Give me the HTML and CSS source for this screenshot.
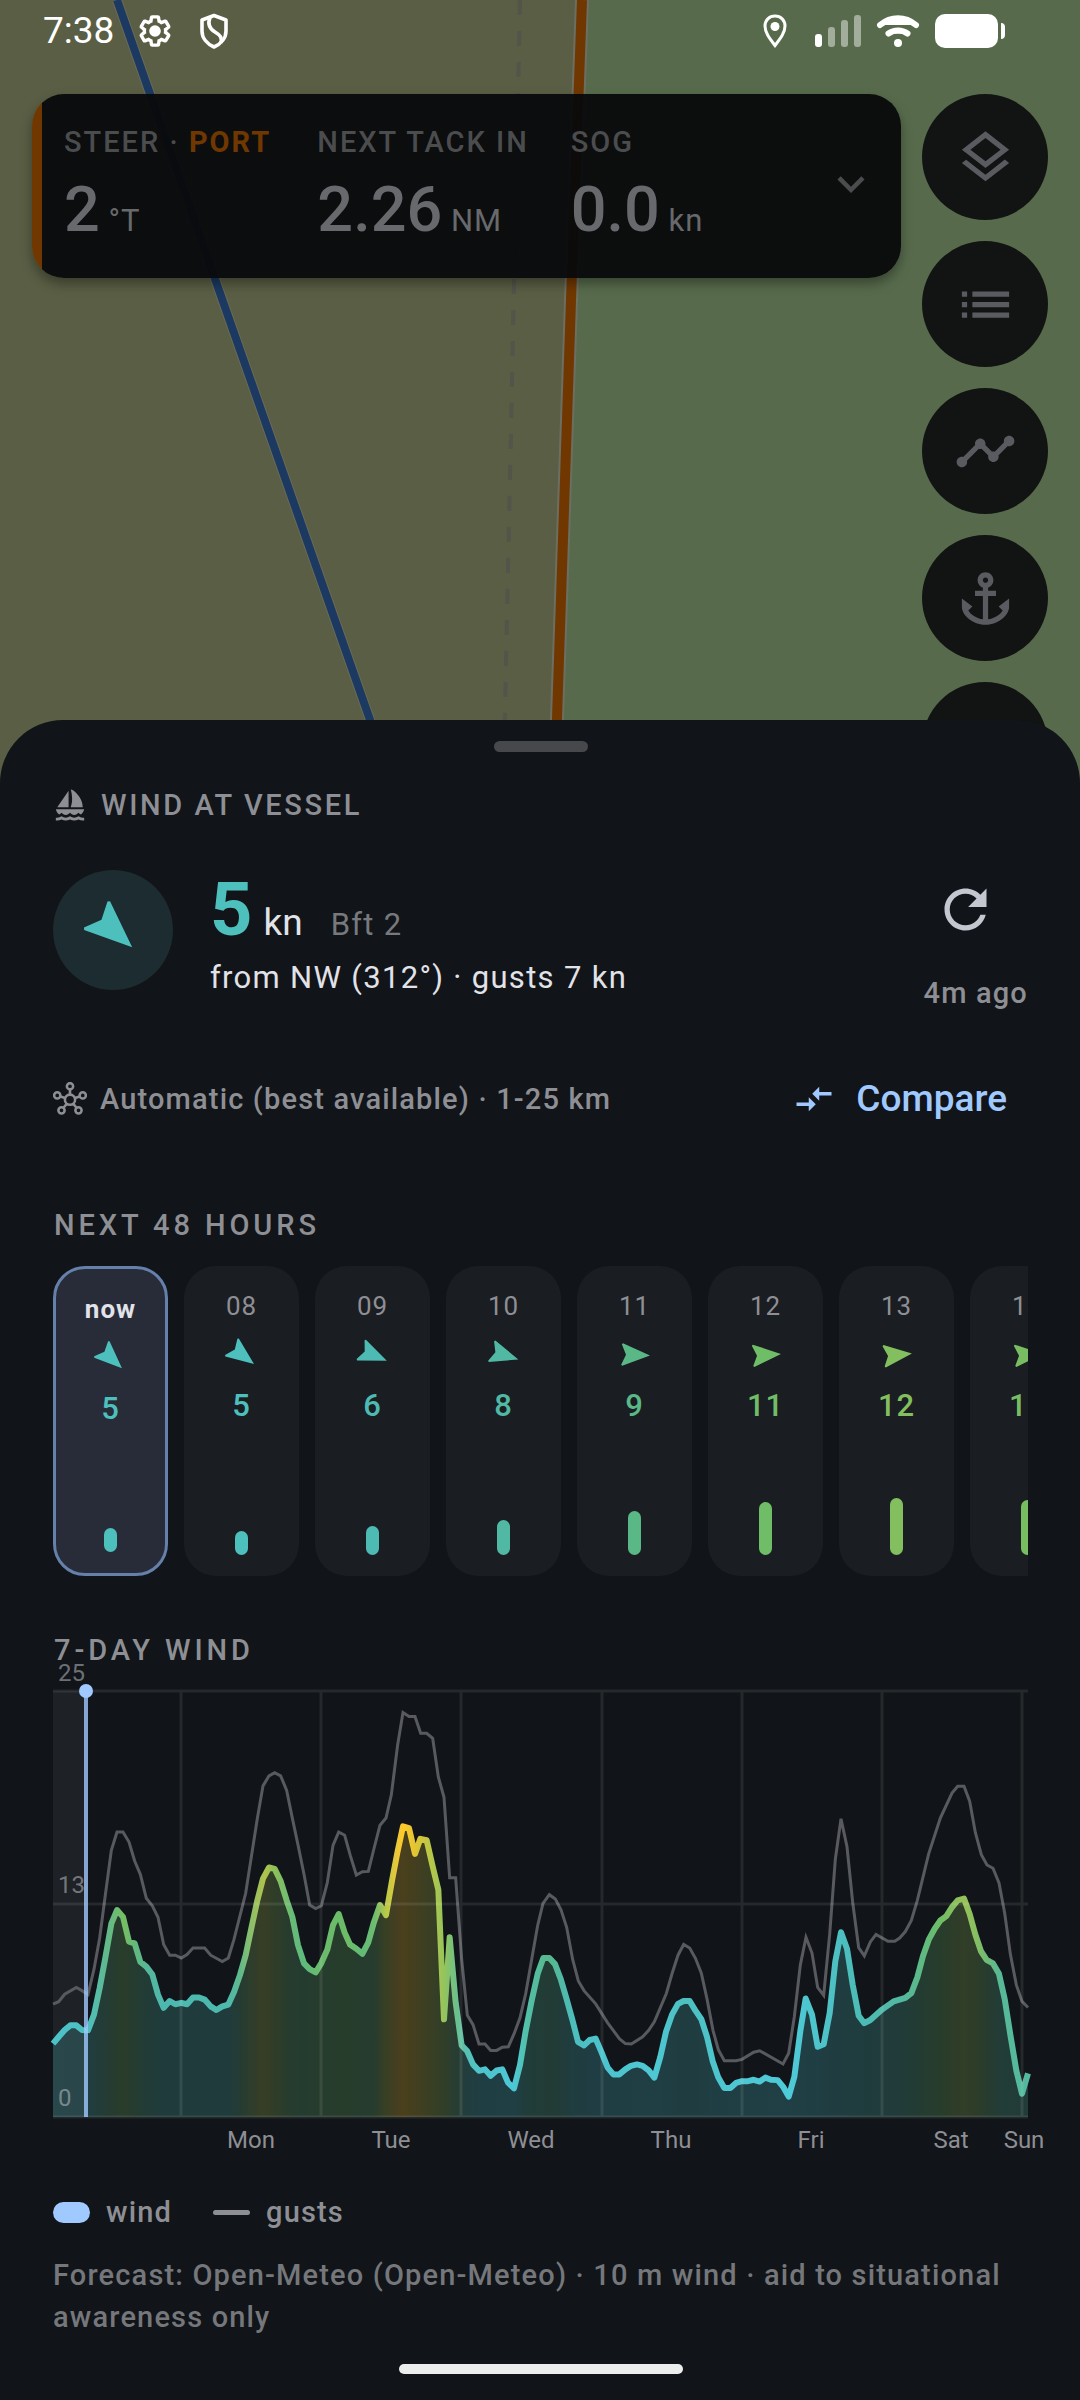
FILE: index.html
```html
<!DOCTYPE html>
<html lang="en">
<head>
<meta charset="utf-8">
<meta name="viewport" content="width=device-width, initial-scale=1">
<title>Wind at vessel</title>
<link rel="stylesheet" href="styles.css">
</head>
<body>
<svg class="defs" aria-hidden="true">
  <symbol id="arrow" viewBox="0 0 24 24"><path d="M12 2L4.5 20.29l.71.71L12 18l6.79 3 .71-.71z"/></symbol>
</svg>

<header class="scene">
  <svg class="map" viewBox="0 0 1080 808" preserveAspectRatio="xMidYMin slice" aria-hidden="true">
    <rect width="1080" height="808" fill="#5a5e44"/>
    <path d="M582 0H1080V808H554z" fill="#576b4c"/>
    <path d="M520 0L503 808" stroke="#53544a" stroke-width="4" stroke-dasharray="15 16" fill="none"/>
    <path d="M117 0L401 808" stroke="#6b6a58" stroke-width="10" fill="none"/>
    <path d="M117 0L401 808" stroke="#1b3961" stroke-width="8" fill="none"/>
    <path d="M582 0L571 300 554 808" stroke="#6c6e62" stroke-width="14" fill="none"/>
    <path d="M582 0L571 300 554 808" stroke="#703800" stroke-width="10" fill="none"/>
  </svg>

  <div class="status">
    <time class="clock">7:38</time>
    <svg class="status-icon gear" viewBox="0 0 24 24" width="40" height="40"><path d="M19.43 12.98c.04-.32.07-.64.07-.98s-.03-.66-.07-.98l2.11-1.65c.19-.15.24-.42.12-.64l-2-3.46c-.09-.16-.26-.25-.44-.25-.06 0-.12.01-.17.03l-2.49 1c-.52-.4-1.08-.73-1.69-.98l-.38-2.65C14.46 2.18 14.25 2 14 2h-4c-.25 0-.46.18-.49.42l-.38 2.65c-.61.25-1.17.59-1.69.98l-2.49-1c-.06-.02-.12-.03-.18-.03-.17 0-.34.09-.43.25l-2 3.46c-.13.22-.07.49.12.64l2.11 1.65c-.04.32-.07.65-.07.98s.03.66.07.98l-2.11 1.65c-.19.15-.24.42-.12.64l2 3.46c.09.16.26.25.44.25.06 0 .12-.01.17-.03l2.49-1c.52.4 1.08.73 1.69.98l.38 2.65c.03.24.24.42.49.42h4c.25 0 .46-.18.49-.42l.38-2.65c.61-.25 1.17-.59 1.69-.98l2.49 1c.06.02.12.03.18.03.17 0 .34-.09.43-.25l2-3.46c.12-.22.07-.49-.12-.64z" fill="none" stroke="#fff" stroke-width="2.4" transform="translate(1.8 1.8) scale(.85)"/><circle cx="12" cy="12" r="3.5" fill="#fff"/></svg>
    <svg class="status-icon" viewBox="0 0 30 36" width="30" height="36"><path d="M15 2.500L27 7V18C27 25 22 31 15 34 8 31 3 25 3 18V7z" fill="none" stroke="#fff" stroke-width="3.600" stroke-linejoin="round"/><path d="M11 4.500C8 12 11 16 16 19 22 22.500 23 25 22 30" fill="none" stroke="#fff" stroke-width="3.600"/></svg>
    <span class="spacer"></span>
    <svg class="status-icon pin" viewBox="0 0 24 34" width="24" height="34"><path d="M12 2C6.200 2 2 6.300 2 12c0 7 5 13 10 19.500C17 25 22 19 22 12 22 6.300 17.800 2 12 2z" fill="none" stroke="#fff" stroke-width="3"/><circle cx="12" cy="12.500" r="4.500" fill="#fff"/></svg>
    <svg class="status-icon signal" viewBox="0 0 46 34" width="46" height="34" fill="#fff"><rect x="0" y="20" width="7" height="13" rx="3"/><g fill-opacity=".45"><rect x="13" y="13" width="7" height="20" rx="3"/><rect x="26" y="6" width="7" height="27" rx="3"/><rect x="39" y="1" width="7" height="32" rx="3"/></g></svg>
    <svg class="status-icon" viewBox="0 0 44 34" width="44" height="34" fill="none" stroke="#fff" stroke-width="6" stroke-linecap="round"><path d="M4 11C15 2 29 2 40 11M12.500 19.500C18 15.500 26 15.500 31.500 19.500"/><circle cx="22" cy="29" r="4" fill="#fff" stroke="none"/></svg>
    <svg class="status-icon" viewBox="0 0 71 34" width="71" height="34" fill="#fff"><rect width="63" height="34" rx="10"/><path d="M66 9c3 0 4 2 4 4v8c0 2-1 4-4 4z"/></svg>
  </div>

  <div class="overlay">
    <section class="steer-card" aria-label="Steering">
      <div class="metric">
        <span class="metric-label">STEER · <b>PORT</b></span>
        <span class="metric-value"><strong>2</strong> °T</span>
      </div>
      <div class="metric">
        <span class="metric-label">NEXT TACK IN</span>
        <span class="metric-value"><strong>2.26</strong> NM</span>
      </div>
      <div class="metric">
        <span class="metric-label">SOG</span>
        <span class="metric-value"><strong>0.0</strong> kn</span>
      </div>
      <button class="expand" aria-label="Expand"><svg viewBox="0 0 24 24" width="54" height="54"><path d="M16.590 8.590L12 13.170 7.410 8.590 6 10l6 6 6-6z"/></svg></button>
    </section>
    <nav class="tools" aria-label="Map tools">
      <button class="tool" aria-label="Layers"><svg viewBox="0 0 24 24"><path fill-rule="evenodd" d="M11.990 18.540l-7.370-5.730L3 14.070l9 7 9-7-1.630-1.270zM12 16l7.360-5.730L21 9l-9-7-9 7 1.630 1.270zm0-11.470L17.740 9 12 13.470 6.260 9z"/></svg></button>
      <button class="tool" aria-label="List"><svg viewBox="0 0 24 24"><path d="M3 13h2v-2H3zm0 4h2v-2H3zm0-8h2V7H3zm4 4h14v-2H7zm0 4h14v-2H7zM7 7v2h14V7z"/></svg></button>
      <button class="tool" aria-label="Track"><svg viewBox="0 0 24 24"><path d="M23 8c0 1.100-.9 2-2 2-.18 0-.35-.02-.51-.07l-3.560 3.550c.05.160.07.340.07.520 0 1.100-.9 2-2 2s-2-.9-2-2c0-.18.020-.36.070-.52l-2.550-2.550c-.16.050-.34.070-.52.070s-.36-.02-.52-.07l-4.550 4.560c.05.160.07.330.07.510 0 1.100-.9 2-2 2s-2-.9-2-2 .9-2 2-2c.18 0 .35.020.51.070l4.560-4.550C8.020 9.360 8 9.180 8 9c0-1.100.9-2 2-2s2 .9 2 2c0 .18-.02.360-.07.520l2.550 2.550c.16-.05.340-.07.520-.07s.36.020.52.070l3.550-3.560C19.020 8.350 19 8.180 19 8c0-1.100.9-2 2-2s2 .9 2 2z"/></svg></button>
      <button class="tool" aria-label="Anchor"><svg viewBox="0 0 24 24"><path fill-rule="evenodd" d="M17 15l1.550 1.550c-.96 1.690-3.330 3.040-5.550 3.370V11h3V9h-3V7.820C14.160 7.400 15 6.300 15 5c0-1.650-1.350-3-3-3S9 3.350 9 5c0 1.300.84 2.400 2 2.820V9H8v2h3v8.920c-2.220-.33-4.590-1.680-5.550-3.370L7 15l-4-3v3c0 3.880 4.920 7 9 7s9-3.120 9-7v-3l-4 3zM12 4c.55 0 1 .45 1 1s-.45 1-1 1-1-.45-1-1 .45-1 1-1z"/></svg></button>
      <button class="tool" aria-label="More"></button>
    </nav>
  </div>
</header>

<main class="sheet">
  <div class="handle"></div>

  <h1 class="title">
    <svg viewBox="0 0 24 24" width="34" height="34" aria-hidden="true"><path d="M11 13.500V2L3 13.500h8zm10 0C21 6.500 14.500 1 12.500 1c0 0 1 3 1 6.500s-1 6-1 6H21zm1 1.500H2c.31 1.530 1.160 2.840 2.330 3.730.65-.27 1.220-.72 1.670-1.230.73.840 1.800 1.500 3 1.500s2.270-.66 3-1.500c.73.840 1.800 1.500 3 1.500s2.260-.66 3-1.500c.45.510 1.020.96 1.670 1.230C20.840 17.840 21.690 16.530 22 15zm0 8v-2h-1c-1.040 0-2.080-.35-3-1-1.830 1.300-4.170 1.300-6 0-1.830 1.300-4.170 1.300-6 0-.91.650-1.960 1-3 1H2v2h1c1.030 0 2.050-.25 3-.75 1.890 1 4.110 1 6 0 1.890 1 4.110 1 6 0 .95.500 1.970.750 3 .750h1z"/></svg>
    WIND AT VESSEL
  </h1>

  <section class="current">
    <div class="dial"><svg width="62" height="62" style="transform:rotate(132deg)"><use href="#arrow"/></svg></div>
    <div class="reading">
      <p class="speed"><strong>5</strong><span class="unit">kn</span><span class="bft">Bft 2</span></p>
      <p class="detail">from NW (312°) · gusts 7 kn</p>
    </div>
    <div class="update">
      <button class="refresh" aria-label="Refresh"><svg viewBox="0 0 24 24" width="63" height="63"><path d="M17.650 6.350C16.200 4.900 14.210 4 12 4c-4.420 0-7.990 3.580-7.990 8s3.570 8 7.990 8c3.730 0 6.840-2.550 7.730-6h-2.080c-.82 2.330-3.040 4-5.650 4-3.310 0-6-2.690-6-6s2.690-6 6-6c1.660 0 3.140.69 4.220 1.780L13 11h7V4l-2.350 2.350z"/></svg></button>
      <span class="age">4m ago</span>
    </div>
  </section>

  <section class="source">
    <svg class="hub" viewBox="0 0 24 24" width="34" height="34" aria-hidden="true"><circle cx="12" cy="12.500" r="3.600"/><circle cx="12" cy="3" r="2.200"/><circle cx="3" cy="9.500" r="2.200"/><circle cx="21" cy="9.500" r="2.200"/><circle cx="6" cy="20" r="2.200"/><circle cx="18" cy="20" r="2.200"/><path d="M12 5.200V9M5.200 10.200L8.500 11.300M18.800 10.200L15.500 11.300M7.400 18.200L9.700 15.400M16.600 18.200L14.300 15.400"/></svg>
    <span class="model">Automatic (best available) · 1-25 km</span>
    <button class="compare"><svg viewBox="0 0 24 24" width="42" height="42" aria-hidden="true"><path d="M9.010 14H2v2h7.010v3L13 15l-3.990-4v3zm5.980-1v-3H22V8h-7.010V5L11 9l3.990 4z"/></svg>Compare</button>
  </section>

  <h2 class="heading">NEXT 48 HOURS</h2>
  <ul class="hours">
    <li class="hour now" style="color:#4dbfbc"><span class="hour-label">now</span><svg class="dir" style="transform:rotate(133deg)"><use href="#arrow"/></svg><span class="hour-value">5</span><i class="bar" style="height:24px"></i></li>
    <li class="hour" style="color:#4dbfbc"><span class="hour-label">08</span><svg class="dir" style="transform:rotate(127deg)"><use href="#arrow"/></svg><span class="hour-value">5</span><i class="bar" style="height:24px"></i></li>
    <li class="hour" style="color:#4dbab3"><span class="hour-label">09</span><svg class="dir" style="transform:rotate(113deg)"><use href="#arrow"/></svg><span class="hour-value">6</span><i class="bar" style="height:29px"></i></li>
    <li class="hour" style="color:#51b8a4"><span class="hour-label">10</span><svg class="dir" style="transform:rotate(107deg)"><use href="#arrow"/></svg><span class="hour-value">8</span><i class="bar" style="height:35px"></i></li>
    <li class="hour" style="color:#5ab886"><span class="hour-label">11</span><svg class="dir" style="transform:rotate(92deg)"><use href="#arrow"/></svg><span class="hour-value">9</span><i class="bar" style="height:44px"></i></li>
    <li class="hour" style="color:#70bd68"><span class="hour-label">12</span><svg class="dir" style="transform:rotate(86deg)"><use href="#arrow"/></svg><span class="hour-value">11</span><i class="bar" style="height:53px"></i></li>
    <li class="hour" style="color:#83be5f"><span class="hour-label">13</span><svg class="dir" style="transform:rotate(84deg)"><use href="#arrow"/></svg><span class="hour-value">12</span><i class="bar" style="height:57px"></i></li>
    <li class="hour" style="color:#79bd63"><span class="hour-label">14</span><svg class="dir" style="transform:rotate(86deg)"><use href="#arrow"/></svg><span class="hour-value">11</span><i class="bar" style="height:55px"></i></li>
  </ul>

  <h2 class="heading week">7-DAY WIND</h2>
  <svg class="chart" viewBox="0 0 975 484" role="img" aria-label="7-day wind and gusts">
    <defs>
      <linearGradient id="scale" gradientUnits="userSpaceOnUse" x1="0" y1="0" x2="3083" y2="0">
        <stop offset=".052" stop-color="#4cc3c8"/><stop offset=".085" stop-color="#4dbfc0"/><stop offset=".102" stop-color="#5fb98f"/><stop offset=".120" stop-color="#76be63"/><stop offset=".131" stop-color="#62b97c"/><stop offset=".143" stop-color="#56b89a"/><stop offset=".159" stop-color="#4db8b0"/><stop offset=".222" stop-color="#4db8ad"/><stop offset=".233" stop-color="#5fb98b"/><stop offset=".242" stop-color="#86be70"/><stop offset=".257" stop-color="#b0c34c"/><stop offset=".268" stop-color="#8bc05c"/><stop offset=".284" stop-color="#68bb78"/><stop offset=".295" stop-color="#5fba7e"/><stop offset=".311" stop-color="#69bb6c"/><stop offset=".340" stop-color="#6cbc68"/><stop offset=".352" stop-color="#62ba78"/><stop offset=".364" stop-color="#6dbc70"/><stop offset=".375" stop-color="#b5c94a"/><stop offset=".387" stop-color="#f0c838"/><stop offset=".392" stop-color="#ffca28"/><stop offset=".404" stop-color="#e0c535"/><stop offset=".415" stop-color="#c2c843"/><stop offset=".432" stop-color="#94c45c"/><stop offset=".443" stop-color="#6fc088"/><stop offset=".454" stop-color="#56c0b5"/><stop offset=".466" stop-color="#4dc4cc"/><stop offset=".500" stop-color="#4dc8d6"/><stop offset=".512" stop-color="#52bfa8"/><stop offset=".534" stop-color="#58b88c"/><stop offset=".545" stop-color="#52b9a3"/><stop offset=".557" stop-color="#4dbdbc"/><stop offset=".584" stop-color="#4cc3cd"/><stop offset=".636" stop-color="#4ec8d4"/><stop offset=".665" stop-color="#4dbfc0"/><stop offset=".707" stop-color="#4dc6d0"/><stop offset=".767" stop-color="#4ecad8"/><stop offset=".818" stop-color="#4dbfc0"/><stop offset=".841" stop-color="#4cbbb4"/><stop offset=".876" stop-color="#52b8a2"/><stop offset=".892" stop-color="#5ab98b"/><stop offset=".915" stop-color="#6fbd66"/><stop offset=".938" stop-color="#98c158"/><stop offset=".950" stop-color="#85be62"/><stop offset=".960" stop-color="#6fbb78"/><stop offset=".973" stop-color="#57b997"/><stop offset="1" stop-color="#54b9a0"/>
      </linearGradient>
    </defs>
    <rect class="past" x="0" y="20" width="33" height="426"/>
    <svg class="plot" x="0" y="20" width="975" height="426" viewBox="158 200 2925 1190" preserveAspectRatio="none">
      <path class="area" d="M158 1390V1185L176 1165 193 1147 210 1134 228 1134 245 1147 263 1148 281 1104 298 1030 315 945 333 850 350 812 368 831 386 900 403 905 420 957 438 970 456 992 473 1048 490 1085 508 1066 525 1075 543 1071 560 1075 578 1056 596 1056 613 1062 631 1081 648 1091 666 1081 684 1076 701 1041 719 993 736 938 754 858 771 785 788 724 806 693 823 697 841 731 859 785 876 831 893 910 911 961 928 977 946 986 963 960 981 922 998 854 1015 823 1033 875 1049 908 1068 920 1086 934 1104 902 1121 845 1139 798 1157 826 1175 730 1192 647 1208 578 1226 583 1244 655 1260 613 1279 617 1297 690 1314 755 1331 1117 1348 888 1366 1070 1384 1190 1400 1205 1418 1243 1436 1261 1454 1257 1471 1275 1489 1260 1506 1257 1523 1294 1541 1310 1559 1245 1576 1150 1594 1065 1612 990 1629 946 1647 946 1664 963 1681 1004 1698 1058 1716 1118 1733 1180 1751 1190 1768 1175 1786 1171 1804 1210 1822 1252 1839 1271 1857 1271 1875 1257 1892 1247 1910 1243 1927 1247 1945 1260 1962 1280 1980 1222 1997 1152 2015 1104 2033 1074 2050 1066 2068 1066 2085 1092 2103 1117 2120 1166 2137 1234 2154 1280 2172 1309 2190 1309 2207 1295 2225 1290 2243 1290 2260 1286 2278 1291 2295 1280 2312 1286 2332 1287 2348 1305 2365 1333 2382 1278 2400 1150 2416 1059 2435 1104 2452 1194 2470 1187 2488 1100 2505 955 2522 874 2540 920 2557 1020 2575 1107 2592 1128 2610 1119 2645 1090 2680 1067 2715 1057 2733 1044 2751 1000 2768 940 2786 893 2803 864 2820 841 2838 829 2855 804 2872 785 2891 780 2908 823 2925 880 2942 927 2959 951 2978 961 2996 990 3013 1060 3030 1160 3048 1260 3065 1325 3083 1268V1390z"/>
      <path class="gust" d="M158 1075L175 1068 193 1047 228 1028 245 1037 263 1048 281 977 298 890 315 770 333 645 350 594 368 594 386 622 403 675 420 712 438 779 456 800 473 832 490 908 508 938 525 938 543 946 560 936 578 918 613 918 631 938 666 956 684 946 701 894 736 765 771 556 788 465 806 437 823 428 841 437 859 478 876 555 893 630 911 712 928 798 946 808 963 800 981 735 998 631 1015 594 1033 603 1050 660 1068 714 1086 705 1104 704 1121 640 1139 575 1157 555 1173 490 1192 350 1208 260 1226 271 1244 271 1261 318 1279 318 1297 332 1314 440 1331 497 1348 722 1366 722 1384 950 1401 1106 1418 1132 1436 1186 1454 1186 1471 1204 1489 1204 1506 1195 1524 1194 1541 1158 1559 1113 1576 1046 1594 950 1612 855 1628 793 1647 769 1665 781 1682 811 1699 860 1717 950 1734 1010 1751 1037 1786 1074 1822 1127 1857 1171 1875 1185 1893 1186 1927 1166 1945 1148 1962 1124 1998 1045 2015 990 2033 938 2050 908 2068 918 2085 946 2103 988 2120 1060 2138 1148 2154 1202 2172 1233 2207 1233 2225 1229 2260 1209 2278 1205 2348 1242 2365 1212 2382 1110 2400 965 2417 888 2435 932 2452 1028 2470 1050 2488 880 2505 670 2522 557 2540 635 2557 790 2575 917 2592 940 2610 901 2627 880 2663 899 2683 899 2698 890 2715 872 2733 841 2751 785 2785 655 2820 555 2855 485 2872 466 2891 466 2908 508 2925 595 2943 657 2960 686 2978 695 2996 736 3013 820 3030 935 3048 1021 3065 1067 3083 1084"/>
      <path class="wind" d="M158 1185L176 1165 193 1147 210 1134 228 1134 245 1147 263 1148 281 1104 298 1030 315 945 333 850 350 812 368 831 386 900 403 905 420 957 438 970 456 992 473 1048 490 1085 508 1066 525 1075 543 1071 560 1075 578 1056 596 1056 613 1062 631 1081 648 1091 666 1081 684 1076 701 1041 719 993 736 938 754 858 771 785 788 724 806 693 823 697 841 731 859 785 876 831 893 910 911 961 928 977 946 986 963 960 981 922 998 854 1015 823 1033 875 1049 908 1068 920 1086 934 1104 902 1121 845 1139 798 1157 826 1175 730 1192 647 1208 578 1226 583 1244 655 1260 613 1279 617 1297 690 1314 755 1331 1117 1348 888 1366 1070 1384 1190 1400 1205 1418 1243 1436 1261 1454 1257 1471 1275 1489 1260 1506 1257 1523 1294 1541 1310 1559 1245 1576 1150 1594 1065 1612 990 1629 946 1647 946 1664 963 1681 1004 1698 1058 1716 1118 1733 1180 1751 1190 1768 1175 1786 1171 1804 1210 1822 1252 1839 1271 1857 1271 1875 1257 1892 1247 1910 1243 1927 1247 1945 1260 1962 1280 1980 1222 1997 1152 2015 1104 2033 1074 2050 1066 2068 1066 2085 1092 2103 1117 2120 1166 2137 1234 2154 1280 2172 1309 2190 1309 2207 1295 2225 1290 2243 1290 2260 1286 2278 1291 2295 1280 2312 1286 2332 1287 2348 1305 2365 1333 2382 1278 2400 1150 2416 1059 2435 1104 2452 1194 2470 1187 2488 1100 2505 955 2522 874 2540 920 2557 1020 2575 1107 2592 1128 2610 1119 2645 1090 2680 1067 2715 1057 2733 1044 2751 1000 2768 940 2786 893 2803 864 2820 841 2838 829 2855 804 2872 785 2891 780 2908 823 2925 880 2942 927 2959 951 2978 961 2996 990 3013 1060 3030 1160 3048 1260 3065 1325 3083 1268"/>
    </svg>
    <path class="grid" d="M0 20H975M0 233H975M0 446H975M128 20V446M268 20V446M408 20V446M549 20V446M689 20V446M829 20V446M969 20V446"/>
    <path class="cursor" d="M33 20V446"/>
    <circle class="cursor-dot" cx="33" cy="20" r="7"/>
    <g class="scale-label"><text x="5" y="10">25</text><text x="5" y="222">13</text><text x="5" y="435">0</text></g>
    <g class="day-label"><text x="198" y="477">Mon</text><text x="338" y="477">Tue</text><text x="478" y="477">Wed</text><text x="618" y="477">Thu</text><text x="758" y="477">Fri</text><text x="898" y="477">Sat</text><text x="971" y="477">Sun</text></g>
  </svg>

  <div class="legend">
    <span class="key"><i class="swatch-wind"></i>wind</span>
    <span class="key"><i class="swatch-gust"></i>gusts</span>
  </div>
  <p class="credit">Forecast: Open-Meteo (Open-Meteo) · 10 m wind · aid to situational awareness only</p>
  <div class="home-bar"></div>
</main>
</body>
</html>
```
FILE: styles.css
```css
* { box-sizing: border-box; }

body {
  margin: 0;
  min-height: 100vh;
  display: flex;
  flex-direction: column;
  background: #111418;
  color: #e2e2e9;
  font-family: Roboto, "Noto Sans", sans-serif;
  font-size: 29px;
  line-height: 42px;
}

h1, h2, p, ul { margin: 0; padding: 0; font-size: inherit; }
ul { list-style: none; }
svg { display: block; flex: none; fill: currentColor; }
button {
  padding: 0;
  border: 0;
  background: none;
  color: inherit;
  font: inherit;
  letter-spacing: inherit;
  cursor: pointer;
}

.defs { position: absolute; width: 0; height: 0; }

/* map and the controls on it */
.scene { position: relative; overflow: hidden; }
.map { position: absolute; inset: 0; width: 100%; height: 100%; }

.status {
  position: relative;
  display: flex;
  align-items: center;
  height: 62px;
  margin-bottom: 32px;
  padding: 0 74px 0 43px;
  color: #fff;
}
.clock { font-size: 37px; margin-right: 21px; }
.gear { margin-right: 24px; }
.spacer { flex: 1; }
.pin { margin-right: 28px; }
.signal { margin-right: 15px; }
.signal + .status-icon { margin-right: 15px; }

.overlay {
  position: relative;
  display: flex;
  align-items: flex-start;
  gap: 21px;
  padding: 0 32px 0 32px;
}

.steer-card {
  flex: 1;
  display: flex;
  align-items: center;
  min-height: 184px;
  padding: 27px 23px 31px 32px;
  border-radius: 32px;
  background: linear-gradient(90deg, #703800 10px, rgba(8, 9, 11, .95) 10px);
  box-shadow: 0 6px 12px rgba(0, 0, 0, .35);
  color: #68696c;
}
.metric { flex: 1; display: flex; flex-direction: column; gap: 10px; white-space: nowrap; }
.metric-label { color: #4b4c4e; font-weight: 500; letter-spacing: 2px; }
.metric-label b { color: #703800; font-weight: 700; }
.metric-value { font-size: 31px; line-height: 31px; letter-spacing: 1px; }
.metric-value strong { font-size: 63px; font-weight: 500; line-height: 74px; letter-spacing: 0; }
.expand { color: #4b4c4e; }

.tools { display: flex; flex-direction: column; gap: 21px; }
.tool {
  display: grid;
  place-items: center;
  width: 126px;
  height: 126px;
  border-radius: 50%;
  background: #111412;
  color: #5a5b60;
}
.tool svg { width: 63px; height: 63px; }

/* bottom sheet */
.sheet {
  position: relative;
  flex: 1;
  display: flex;
  flex-direction: column;
  margin-top: -88px;
  padding: 21px 52px 26px 53px;
  border-radius: 63px 63px 0 0;
  background: #111418;
}
.handle {
  width: 94px;
  height: 11px;
  margin: 0 auto 32px;
  border-radius: 6px;
  background: #47484c;
}

.title {
  display: flex;
  align-items: center;
  gap: 14px;
  margin-bottom: 20px;
  color: #8e8f94;
  font-weight: 500;
  letter-spacing: .09em;
}

.current { display: flex; align-items: center; gap: 37px; margin-bottom: 22px; }
.dial {
  display: grid;
  place-items: center;
  width: 120px;
  height: 120px;
  border-radius: 50%;
  background: #1c2c30;
  color: #4dbfbc;
}
.reading { flex: 1; letter-spacing: .045em; }
.speed { display: flex; align-items: baseline; line-height: 37px; }
.speed strong { margin-right: 11px; color: #4dbfbc; font-size: 74px; font-weight: 700; line-height: 95px; letter-spacing: 0; }
.unit { margin-right: 28px; font-size: 37px; letter-spacing: 0; }
.bft { color: #77797d; font-size: 31px; }
.detail { font-size: 31px; }
.update { display: flex; flex-direction: column; align-items: flex-end; }
.refresh { display: grid; place-items: center; width: 126px; height: 126px; color: #c4c6d0; }
.age { color: #8e8f94; font-weight: 500; letter-spacing: .04em; }

.source {
  display: flex;
  align-items: center;
  gap: 13px;
  min-height: 126px;
  margin-bottom: 42px;
  color: #8e8f94;
  font-weight: 500;
  letter-spacing: .04em;
}
.hub { fill: none; stroke: currentColor; stroke-width: 1.8; }
.model { flex: 1; }
.compare {
  display: flex;
  align-items: center;
  gap: 21px;
  min-height: 126px;
  padding: 0 21px;
  color: #a0c9ff;
  font-size: 37px;
  letter-spacing: 0;
}

.heading { color: #8e8f94; font-weight: 500; letter-spacing: .135em; padding-left: 1px; }

.hours { display: flex; gap: 16px; margin: 20px 0 53px; overflow: hidden; }
.hour {
  flex: none;
  display: flex;
  flex-direction: column;
  align-items: center;
  gap: 12px;
  width: 115px;
  height: 310px;
  padding: 22px 0 21px;
  border-radius: 32px;
  background: #1a1d22;
}
.hour-label { color: #8e8f94; font-size: 26px; line-height: 37px; letter-spacing: 1px; }
.dir { width: 36px; height: 36px; }
.hour-value { font-size: 31px; font-weight: 500; letter-spacing: 1px; }
.bar { width: 13px; margin-top: auto; border-radius: 7px; background: currentColor; }
.now { border: 3px solid #6580aa; background: #272c38; }
.now .hour-label { color: #e2e2e9; font-weight: 700; }

/* forecast chart */
.chart { width: 100%; height: auto; overflow: visible; }
.past { fill: #1e2125; }
.area { fill: url(#scale); fill-opacity: .24; }
.plot { overflow: visible; }
.gust, .wind { fill: none; vector-effect: non-scaling-stroke; }
.gust { stroke: #585a5f; stroke-width: 3; }
.wind { stroke: url(#scale); stroke-width: 6; stroke-linejoin: round; }
.grid { fill: none; stroke: rgba(255, 255, 255, .09); stroke-width: 3; }
.cursor { stroke: #a0c9ff; stroke-opacity: .8; stroke-width: 4; }
.cursor-dot { fill: #a0c9ff; }
.scale-label { fill: rgba(190, 192, 198, .55); font-size: 24px; }
.day-label { fill: #8e8f94; font-size: 24px; text-anchor: middle; }

.legend {
  display: flex;
  gap: 41px;
  margin: 36px 0 21px;
  color: #8e8f94;
  font-weight: 500;
  letter-spacing: .04em;
}
.key { display: flex; align-items: center; gap: 16px; }
.swatch-wind { width: 37px; height: 21px; border-radius: 11px; background: #a0c9ff; }
.swatch-gust { width: 37px; height: 5px; border-radius: 3px; background: #8e8f94; }

.credit { color: #75777b; font-weight: 500; letter-spacing: .04em; }
.home-bar {
  width: 284px;
  height: 10px;
  margin: auto auto 0;
  border-radius: 5px;
  background: #eceeed;
}
```
